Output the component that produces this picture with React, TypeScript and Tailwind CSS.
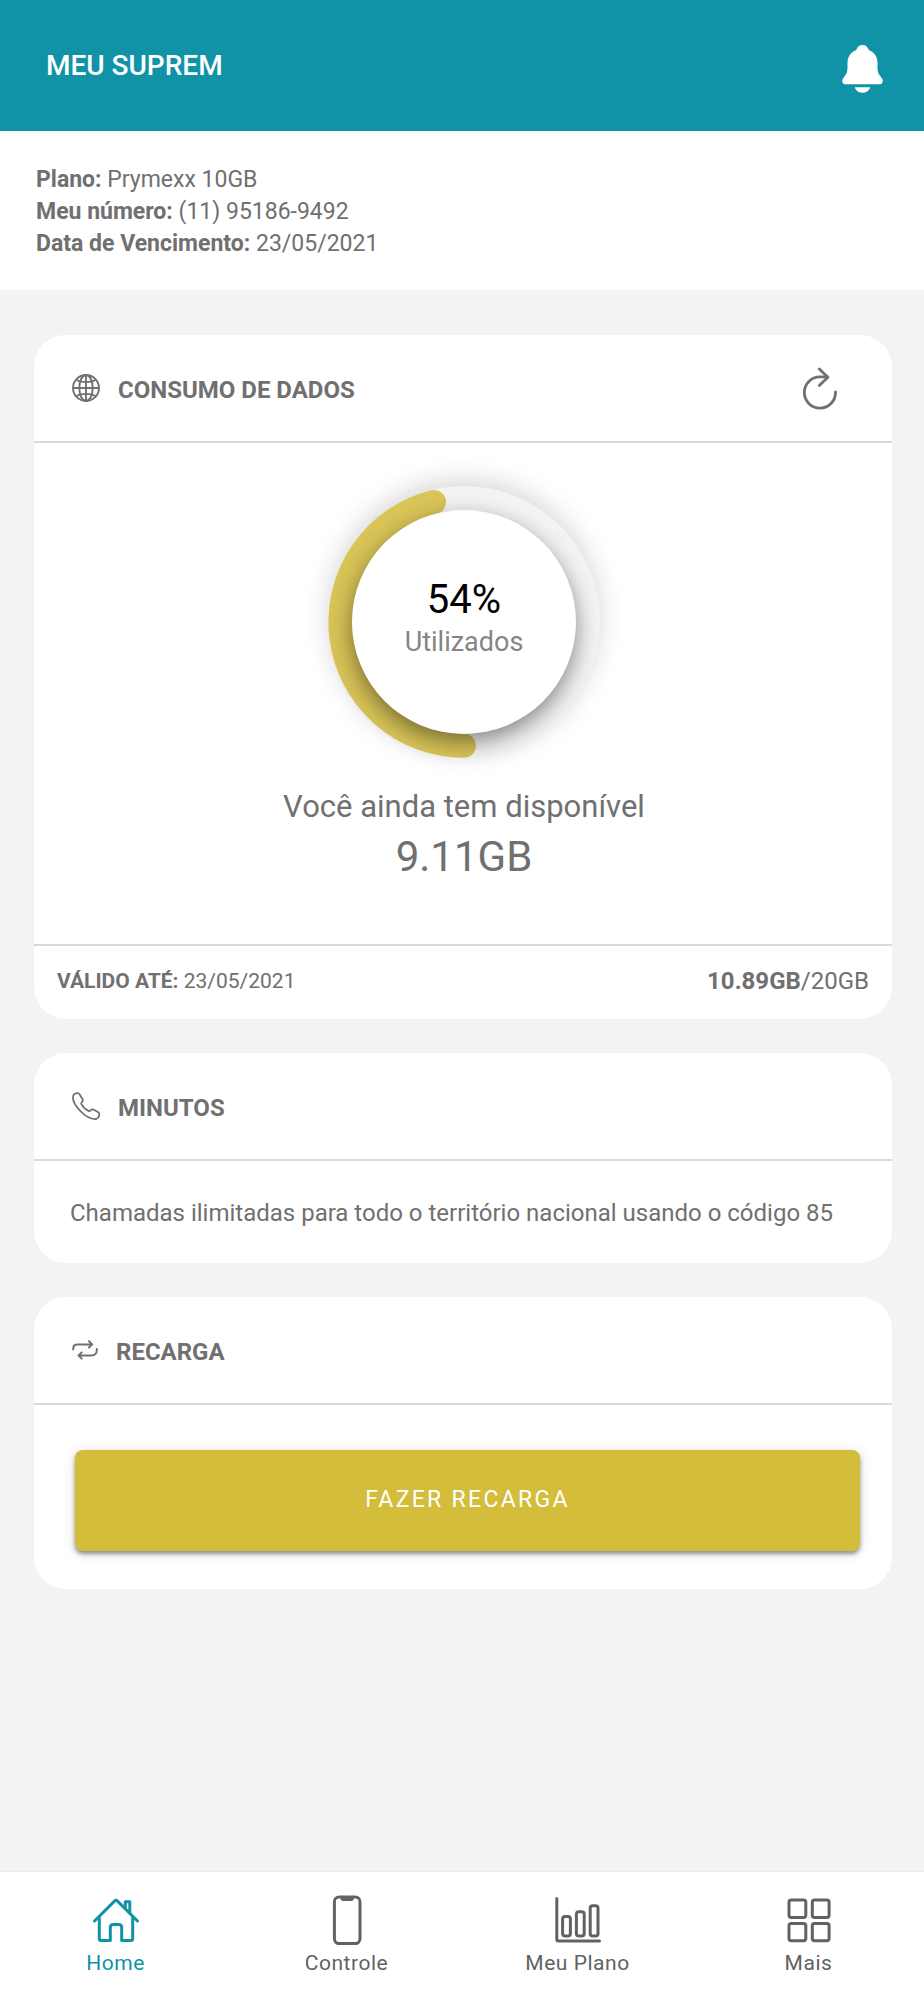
import type { ReactNode } from "react";

function BellIcon() {
  return (
    <svg viewBox="0 0 41 48" className="h-12 w-[41px]" fill="currentColor" aria-hidden="true">
      <path d="M20.500 0c2.900 0 5.300 1.900 6.300 5 5.600 2.200 8.700 6.900 8.700 13.100v4.400c0 3.200.6 5.900 2.500 8.200l1.700 2.200c2.400 3.200.7 6.400-2.700 6.400H4c-3.400 0-5.100-3.200-2.700-6.400L3 30.700c1.900-2.300 2.500-5 2.500-8.200v-4.400C5.500 11.900 8.600 7.200 14.200 5c1-3.100 3.400-5 6.300-5z" />
      <path d="M13.500 42.200h14c.6 0 .8.5.5 1-1.700 3-4.300 4.600-7.500 4.600S14.700 46.200 13 43.200c-.3-.5-.1-1 .5-1z" />
    </svg>
  );
}

function GlobeIcon() {
  return (
    <svg viewBox="0 0 28 28" className="size-7" fill="none" stroke="currentColor" strokeWidth="1.900" aria-hidden="true">
      <circle cx="14" cy="14" r="13" />
      <ellipse cx="14" cy="14" rx="6.700" ry="13" />
      <path d="M14 1v26M1 14h26M4.500 6.200c5.500 2.600 13.500 2.600 19 0M4.500 21.800c5.500-2.600 13.500-2.600 19 0" />
    </svg>
  );
}

function PhoneCallIcon() {
  return (
    <svg viewBox="0 0 28 28" className="size-7" fill="none" stroke="currentColor" strokeWidth="1.800" strokeLinejoin="round" strokeLinecap="round" aria-hidden="true">
      <path d="M1.400 3.200C2.200 1.700 4 .9 5.700 1.100c1 .1 1.500.7 2 1.500l2.700 4.300c.7 1.100.5 2-.2 2.800-.8.9-1.300 1.400-.8 2.400 1.600 3 4.300 5.500 7.300 6.800 1 .4 1.600 0 2.200-.7.800-.9 1.800-1.100 2.900-.5l4.500 2.600c.8.500 1.200 1.200 1.100 2.100-.2 1.900-1.300 4-3.100 4.600C18.500 27.500 12.700 23.600 8.300 19 4.200 14.700-.3 8.200 1.400 3.200z" />
    </svg>
  );
}

function RepeatIcon() {
  return (
    <svg viewBox="1 0 26 20" className="h-5 w-[26px]" fill="none" stroke="currentColor" strokeWidth="2" strokeLinecap="round" strokeLinejoin="round" aria-hidden="true">
      <path d="M2.200 9.500v-.8C2.200 6 4 4.400 6.500 4.400h14.700M18 1.300l3.200 3.100L18 7.500" />
      <path d="M25.800 9v1.200c0 3.200-2.200 5.300-5.400 5.300H7.500M10.700 12.400l-3.200 3.100 3.200 3.100" />
    </svg>
  );
}

function RefreshIcon() {
  return (
    <svg viewBox="0 0 36 44" className="h-11 w-9" fill="none" stroke="currentColor" strokeWidth="2.800" strokeLinecap="round" strokeLinejoin="round" aria-hidden="true">
      <path d="M33.500 26A15.600 15.600 0 1 1 18 10.900h7.500" />
      <path d="M17.300 3l8.600 8.200-8.600 8.200" />
    </svg>
  );
}

function HomeIcon() {
  return (
    <svg viewBox="0 0 48 50" className="h-[50px] w-12" fill="none" stroke="currentColor" strokeWidth="3" strokeLinecap="round" strokeLinejoin="round" aria-hidden="true">
      <path d="M2.500 26 22.800 5.900c.8-.8 1.700-.8 2.500 0L45.500 26" />
      <path d="M7.300 22.500v20.700c0 1.600.8 2.400 2.300 2.400h8.700V32.500c0-2 .9-3 2.900-3h5.600c2 0 2.900 1 2.900 3v13.100h8.700c1.500 0 2.300-.8 2.300-2.400V22.500" />
      <path d="M33.300 13.200V6.700h4.500v11" />
    </svg>
  );
}

function SmartphoneIcon() {
  return (
    <svg viewBox="0 0 48 50" className="h-[50px] w-12" fill="none" stroke="currentColor" strokeWidth="3" aria-hidden="true">
      <rect x="11.400" y="1.900" width="25.600" height="46.700" rx="4.800" />
      <path d="M17.600 2h13.200v1.500c0 1.400-.9 2.400-2.300 2.400h-8.600c-1.400 0-2.300-1-2.300-2.400z" fill="currentColor" stroke="none" />
    </svg>
  );
}

function ChartIcon() {
  return (
    <svg viewBox="0 0 48 50" className="h-[50px] w-12" fill="none" stroke="currentColor" strokeWidth="3" strokeLinecap="round" strokeLinejoin="round" aria-hidden="true">
      <path d="M2.800 3.500v41c0 1 .5 1.500 1.500 1.500h41.200" />
      <rect x="8.600" y="21.500" width="7.800" height="19.500" rx="2.500" />
      <rect x="22.400" y="16.800" width="7.800" height="24.200" rx="2.500" />
      <rect x="36.200" y="10.800" width="7.800" height="30.200" rx="2.500" />
    </svg>
  );
}

function GridIcon() {
  return (
    <svg viewBox="0 0 48 50" className="h-[50px] w-12" fill="none" stroke="currentColor" strokeWidth="3" aria-hidden="true">
      <rect x="4" y="5" width="16.800" height="17.400" rx="2.200" />
      <rect x="27.300" y="5" width="16.800" height="17.400" rx="2.200" />
      <rect x="4" y="28.400" width="16.800" height="17.400" rx="2.200" />
      <rect x="27.300" y="28.400" width="16.800" height="17.400" rx="2.200" />
    </svg>
  );
}

function Card({ icon, title, action, children }: { icon: ReactNode; title: string; action?: ReactNode; children: ReactNode }) {
  return (
    <section className="rounded-[32px] bg-white">
      <div className="flex h-[108px] items-center justify-between border-b-2 border-[#d9d9d9] pr-[54px] pl-[38px]">
        <div className="flex items-center gap-[18px]">
          {icon}
          <h2 className="pt-1 text-[24px] leading-8 font-bold">{title}</h2>
        </div>
        {action}
      </div>
      {children}
    </section>
  );
}

function UsageGauge() {
  return (
    <div className="relative flex size-[272px] items-center justify-center rounded-full bg-[#f3f3f3] shadow-[0_-6px_26px_rgba(0,0,0,0.16)]">
      <svg viewBox="0 0 272 272" className="absolute inset-0 size-full" fill="none" aria-hidden="true">
        <path d="M136 259.700A123.700 123.700 0 0 1 106 16" stroke="#d8c457" strokeWidth="24" strokeLinecap="round" />
      </svg>
      <div className="relative flex size-56 flex-col items-center justify-center rounded-full bg-white pb-2 shadow-[0_8px_22px_rgba(0,0,0,0.45)]">
        <span className="text-[40px] leading-12 text-black">54%</span>
        <span className="text-[27px] leading-9 text-[#858585]">Utilizados</span>
      </div>
    </div>
  );
}

const navItems = [
  { label: "Home", icon: <HomeIcon />, active: true },
  { label: "Controle", icon: <SmartphoneIcon />, active: false },
  { label: "Meu Plano", icon: <ChartIcon />, active: false },
  { label: "Mais", icon: <GridIcon />, active: false },
];

export default function App() {
  return (
    <div className="flex min-h-screen flex-col bg-[#f3f3f3] font-[Roboto,'Noto_Sans',sans-serif] text-[#707070]">
      <header className="flex h-[131px] items-center justify-between bg-[#1193a7] pr-[41px] pl-[46px] text-white">
        <h1 className="text-[28px] leading-9 font-medium">MEU SUPREM</h1>
        <button type="button" aria-label="Notificações" className="pt-1.5">
          <BellIcon />
        </button>
      </header>

      <div className="bg-white px-9 pt-[33px] pb-[30px] text-[23px] leading-8">
        <p><strong>Plano:</strong> Prymexx 10GB</p>
        <p><strong>Meu número:</strong> (11) 95186-9492</p>
        <p><strong>Data de Vencimento:</strong> 23/05/2021</p>
      </div>

      <main className="flex flex-col gap-[34px] pt-[45px] pr-8 pb-[45px] pl-[34px]">
        <Card
          icon={<GlobeIcon />}
          title="CONSUMO DE DADOS"
          action={
            <button type="button" aria-label="Atualizar">
              <RefreshIcon />
            </button>
          }
        >
          <div className="flex flex-col items-center pt-[43px] pb-[59px] pl-0.5">
            <UsageGauge />
            <p className="mt-[27px] text-[31px] leading-11">Você ainda tem disponível</p>
            <p className="text-[42px] leading-14">9.11GB</p>
          </div>
          <div className="flex h-[75px] items-center justify-between border-t-2 border-[#d9d9d9] px-[23px] pb-1">
            <p className="text-[21px] leading-8"><strong>VÁLIDO ATÉ:</strong> 23/05/2021</p>
            <p className="text-[24px] leading-8"><strong>10.89GB</strong>/20GB</p>
          </div>
        </Card>

        <Card icon={<PhoneCallIcon />} title="MINUTOS">
          <p className="px-9 pt-9 pb-[34px] text-[24px] leading-8">
            Chamadas ilimitadas para todo o território nacional usando o código 85
          </p>
        </Card>

        <Card icon={<RepeatIcon />} title="RECARGA">
          <div className="pt-[45px] pr-8 pb-[38px] pl-[41px]">
            <button
              type="button"
              className="h-[101px] w-full rounded-lg bg-[#d3bd3b] text-[23px] tracking-widest text-white shadow-[0_3px_4px_rgba(0,0,0,0.4),0_2px_14px_rgba(0,0,0,0.12)]"
            >
              FAZER RECARGA
            </button>
          </div>
        </Card>
      </main>

      <nav className="mt-auto grid h-[129px] grid-cols-4 border-t border-[#ebebeb] bg-white">
        {navItems.map(({ label, icon, active }) => (
          <a
            key={label}
            href="#"
            aria-current={active ? "page" : undefined}
            className={
              active
                ? "flex flex-col items-center gap-0.5 pt-[23px] text-[21px] leading-8 tracking-wide text-[#1193a7]"
                : "flex flex-col items-center gap-0.5 pt-[23px] text-[21px] leading-8 tracking-wide text-[#626262]"
            }
          >
            {icon}
            {label}
          </a>
        ))}
      </nav>
    </div>
  );
}
